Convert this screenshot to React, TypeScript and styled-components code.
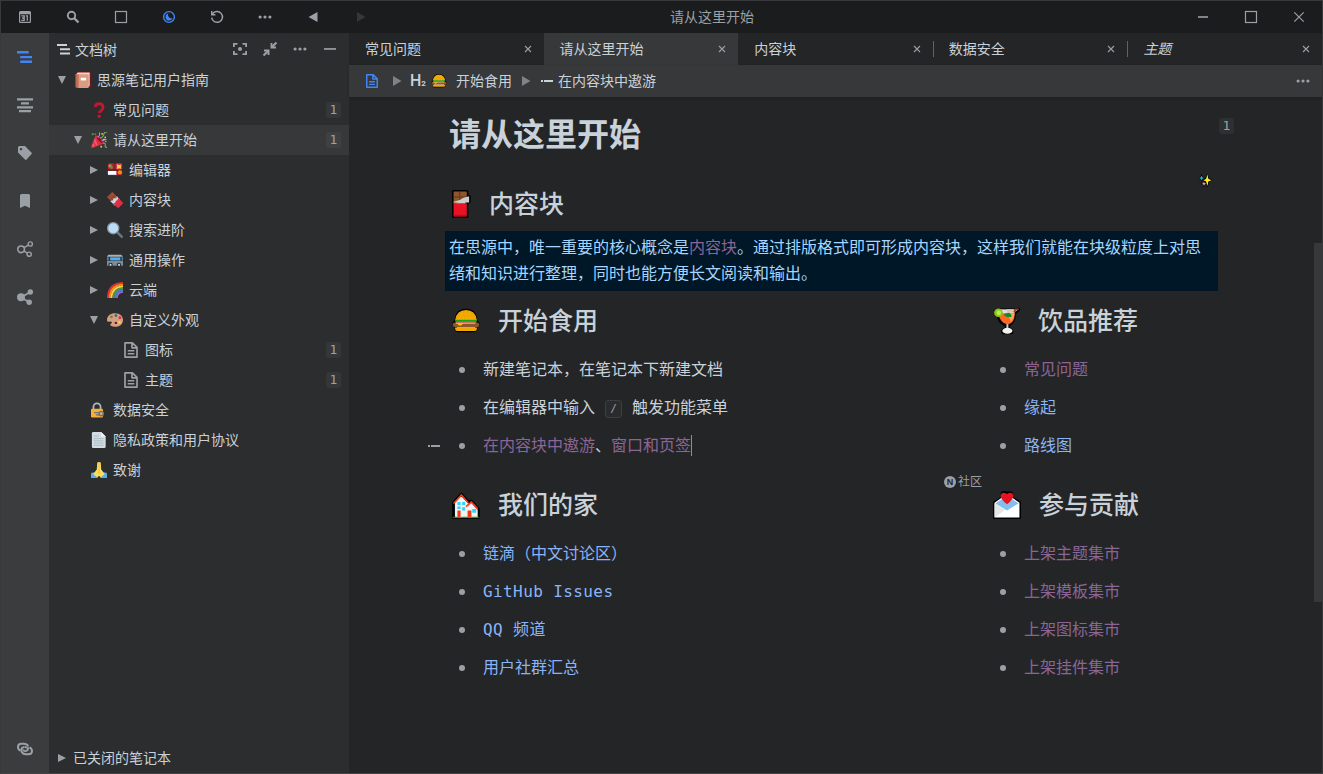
import React from "react";
import styled, { createGlobalStyle, css } from "styled-components";

const Global = createGlobalStyle`
  * { box-sizing: border-box; }
  html, body { margin: 0; padding: 0; background: #242527; }
  body { overflow: hidden; font-family: "Noto Sans CJK SC", sans-serif; color: #c9d1d9; }
  svg { display: block; flex: none; }
  ul, h1, h2, p { margin: 0; padding: 0; font: inherit; }
`;

/* ---------- interface icons ---------- */

const Svg = ({ size = 16, children, box = 16 }: { size?: number; box?: number; children: React.ReactNode }) => (
  <svg width={size} height={size} viewBox={`0 0 ${box} ${box}`} fill="currentColor">{children}</svg>
);

const stroke = { fill: "none", stroke: "currentColor" };

const CalendarIcon = () => (
  <Svg>
    <path fillRule="evenodd" d="M3.500 2h9A1.500 1.500 0 0 1 14 3.500v9a1.500 1.500 0 0 1-1.500 1.500h-9A1.500 1.500 0 0 1 2 12.500v-9A1.500 1.500 0 0 1 3.500 2zM3.200 5.300v7.500h9.600V5.300z" />
    <path d="M4.300 6.800h2.900v4.500H4.300M5 9h2.200M8.700 6.900h1.600v4.900" {...stroke} strokeWidth="1.300" />
  </Svg>
);
const SearchIcon = () => (
  <Svg>
    <circle cx="6.500" cy="6.500" r="3.700" {...stroke} strokeWidth="1.900" />
    <path d="M9.200 9.200l4.300 4.300" {...stroke} strokeWidth="2.400" />
  </Svg>
);
const SquareIcon = () => (
  <Svg><rect x="2.500" y="2.500" width="11" height="11" {...stroke} strokeWidth="1.200" /></Svg>
);
const MoonIcon = () => (
  <Svg>
    <circle cx="8" cy="8" r="5.400" {...stroke} strokeWidth="1.400" />
    <path d="M7.200 4.500A3.600 3.600 0 1 0 11.500 9.200 3.600 3.600 0 0 1 7.200 4.500z" />
  </Svg>
);
const RefreshIcon = () => (
  <Svg>
    <path d="M3.500 5A5.400 5.400 0 1 1 2.700 8.600" {...stroke} strokeWidth="1.500" />
    <path d="M2 2v4.400h4.400V5H3.500V2z" />
  </Svg>
);
const DotsIcon = ({ size = 16 }: { size?: number }) => (
  <Svg size={size}>
    <circle cx="3.100" cy="8" r="1.600" /><circle cx="8" cy="8" r="1.600" /><circle cx="12.900" cy="8" r="1.600" />
  </Svg>
);
const BackIcon = () => <Svg><path d="M12.500 3v10L3.500 8z" /></Svg>;
const ForwardIcon = () => <Svg><path d="M4 3v10l8.500-5z" /></Svg>;
const MinIcon = () => <Svg><path d="M3 7.200h10v1.600H3z" /></Svg>;
const CloseIcon = () => <Svg><path d="M3.300 3.300l9.400 9.400M12.700 3.300l-9.400 9.400" {...stroke} strokeWidth="1.200" /></Svg>;
const SmallCloseIcon = () => <Svg size={8} box={8}><path d="M1 1l6 6M7 1L1 7" {...stroke} strokeWidth="1.100" /></Svg>;
const TreeIcon = () => (
  <Svg><path d="M0 2h11.700v2.400H0zM3.200 6.900H15v2.300H3.200zM3.200 11.600H15V14H3.200z" /></Svg>
);
const TreeTitleIcon = () => (
  <Svg size={14} box={14}><path d="M0 2h10v1.900H0zM3 6.300h10v1.900H3zM3 10.500h10v1.900H3z" /></Svg>
);
const OutlineIcon = () => (
  <Svg><path d="M0 1.200h16v2.200H0zM4 5.200h8v2.200H4zM0 9.200h16v2.200H0zM2 13h12v2.200H2z" /></Svg>
);
const TagIcon = () => (
  <Svg><path fillRule="evenodd" d="M2.500 1H8l6.600 6.700q.7.700 0 1.400l-5 5.400q-.8.800-1.600 0L1 7.500v-5Q1 1 2.500 1zM4 2.900a1.200 1.200 0 1 0 .01 0z" /></Svg>
);
const BookmarkIcon = () => <Svg><path d="M4.500 1h7q1.500 0 1.500 1.500V15l-5-2.300L3 15V2.500Q3 1 4.500 1z" /></Svg>;
const GraphIcon = () => (
  <Svg>
    <circle cx="4.100" cy="8.300" r="3.300" {...stroke} strokeWidth="1.600" />
    <circle cx="13.300" cy="3" r="2.100" {...stroke} strokeWidth="1.400" />
    <circle cx="12.200" cy="13.200" r="2.100" {...stroke} strokeWidth="1.400" />
    <path d="M7 6.700l4.500-2.500M6.800 9.900l3.500 2.200" {...stroke} strokeWidth="1.500" />
  </Svg>
);
const GlobalGraphIcon = () => (
  <Svg>
    <circle cx="4" cy="8.300" r="4" /><circle cx="13.300" cy="3" r="2.700" /><circle cx="12.200" cy="13.200" r="2.700" />
    <path d="M5 7.800l8-4.500M5 9l7 4" {...stroke} strokeWidth="1.700" />
  </Svg>
);
const LinkIcon = () => (
  <Svg>
    <path d="M3.400 9.600Q1 8.400 1 5.900 1 2.700 4.600 2.700H6.800Q10.500 2.700 11.200 5.500" {...stroke} strokeWidth="2" />
    <path d="M12.600 6.400Q15 7.600 15 10.100 15 13.300 11.400 13.300H9.200Q5.200 13.300 4.300 9.800 4.200 6.100 7.600 5.900" {...stroke} strokeWidth="2" />
    <path d="M11.300 6.200Q11.300 9.900 8 10.100 6.300 10 6.400 8.500M9.600 7.500Q9.700 6 8 5.900" {...stroke} strokeWidth="1.800" />
  </Svg>
);
const FocusIcon = () => (
  <Svg>
    <path d="M1.900 6V2.900H5.500M10.500 2.900h3.600V6M14.100 10v3.100h-3.600M5.500 13.100H1.900V10" {...stroke} strokeWidth="1.800" />
    <circle cx="8" cy="8" r="2.100" />
  </Svg>
);
const CollapseIcon = () => (
  <Svg>
    <path d="M9.500 2v4.500H14M2 9.500h4.500V14" {...stroke} strokeWidth="1.900" />
    <path d="M9.500 6.500l5-5M6.500 9.500l-5 5" {...stroke} strokeWidth="2.100" />
  </Svg>
);
const MinusIcon = () => <Svg><path d="M2 7.100h12v1.700H2z" /></Svg>;
const FileIcon = ({ size = 16 }: { size?: number }) => (
  <Svg size={size}>
    <path d="M2 .9h7.400l4.600 4.500v9.700H2zM9 1v4.800h5" {...stroke} strokeWidth="1.700" strokeLinejoin="round" />
    <path d="M4.700 8h6.600v1.600H4.700zM4.700 11h6.600v1.600H4.700z" />
  </Svg>
);
const ItemIcon = () => <Svg size={12} box={12}><path d="M0 5h2v2H0zM3 5h9v2H3z" /></Svg>;

/* ---------- emoji drawings (36 unit grid) ---------- */

const emoji: Record<string, React.ReactNode> = {
  book: (
    <>
      <path fill="#a0041e" d="M3 4Q3 0 7 0h25q3 0 3 3v30q0 3-3 3H5q-4 0-4-4z" />
      <path fill="#e8dccf" d="M4 3q0-2 4-2h25v31H7z" />
      <path fill="#c1694f" d="M1 5q0-2 4-1v32Q1 36 1 32z" />
      <path fill="#d99e82" d="M5 5h24q2 0 2 2v27q0 2-2 2H5z" />
      <path fill="#c1694f" d="M5 5h3v31H5z" />
      <path fill="#fff" d="M13 13h12v6H13z" />
    </>
  ),
  question: (
    <>
      <path d="M10 11q0-7 8-7 9 0 9 8 0 5-5 8-3 2-3 5" fill="none" stroke="#be1931" strokeWidth="6.500" />
      <circle cx="18.500" cy="32" r="3.800" fill="#be1931" />
    </>
  ),
  party: (
    <>
      <path fill="#dd2e44" d="M10 8L0 34q0 3 3 2l26-10q1-4-7-12T10 8z" />
      <path fill="#a0041e" d="M13 11q4 0 9 5t5 9q-4 0-9-5t-5-9z" />
      <path fill="#ea596e" d="M9 14l6 16-3 1-6-10zM5 24l4 8-4 2-3-4z" />
      <path d="M15 12q6-3 4-11M24 21q3-6 11-4" fill="none" stroke="#aa8dd8" strokeWidth="2.500" />
      <path d="M20 14q7-1 9-9t6-3M27 25q6-1 5 5t4 4" fill="none" stroke="#77b255" strokeWidth="2.500" />
      <g fill="#ffcc4d"><circle cx="25" cy="4" r="2" /><circle cx="32" cy="12" r="2" /><circle cx="29" cy="17" r="2" /><circle cx="23" cy="33" r="2" /></g>
      <g fill="#5c913b"><circle cx="4" cy="5" r="2.500" /><circle cx="10" cy="5" r="2" /></g>
      <circle cx="33" cy="21" r="2" fill="#aa8dd8" />
    </>
  ),
  bento: (
    <>
      <rect x="2" y="3" width="15" height="14" rx="3" fill="#be1931" />
      <rect x="19" y="3" width="15" height="14" rx="3" fill="#dd2e44" />
      <path fill="#be1931" d="M2 19h32v9q0 2-2 2H4q-2 0-2-2z" />
      <circle cx="7" cy="9" r="4" fill="#77b255" /><circle cx="10" cy="12" r="3.500" fill="#5c913b" />
      <path fill="#ffcc4d" d="M22 5l5 2 5-1-1 5 1 4-5-1-5 2 1-6z" />
      <path fill="#fff" d="M2 20h19v9H4q-2 0-2-2z" /><path fill="#ccd6dd" d="M3 27h18v2H3z" />
      <circle cx="29" cy="23.500" r="4.800" fill="#f4900c" />
    </>
  ),
  chocolate: (
    <>
      <path fill="#a0503c" d="M12 0l13 13L13 25 0 11z" />
      <path d="M8 4l13 13M4 8l13 13M19 6L6 19" stroke="#6f3428" strokeWidth="1.200" />
      <path fill="#ccd6dd" d="M22 9l8 9-12 13L7 20l6-1 2-5 6 0z" />
      <path fill="#dd2e44" d="M25 13l10 10q2 2 0 4l-8 8q-2 2-4 0L14 26q6-1 6-6 5-1 5-7z" />
    </>
  ),
  magnifier: (
    <>
      <path stroke="#66757f" strokeWidth="6" strokeLinecap="round" d="M25 25l8 8" />
      <circle cx="14" cy="14" r="12.500" fill="#bbddf5" stroke="#8899a6" strokeWidth="3" />
    </>
  ),
  bus: (
    <>
      <path fill="#808b93" d="M3 8h29q4 0 4 4v17q0 2-2 2H0V12q0-4 3-4z" />
      <path fill="#a7b1b8" d="M3 6h29l3 4H0z" />
      <path fill="#292f33" d="M0 11h36v9H0z" />
      <path fill="#55acee" d="M7 12h23v7H7z" />
      <path fill="#3b88c3" d="M0 12h4v7H0zM33 12h3v7h-3z" />
      <g fill="#292f33"><circle cx="8" cy="29" r="5" /><circle cx="27" cy="29" r="5" /></g>
      <g fill="#ccd6dd"><circle cx="8" cy="29" r="2.300" /><circle cx="27" cy="29" r="2.300" /></g>
    </>
  ),
  rainbow: (
    <g fill="none" strokeWidth="4.200">
      <path stroke="#dd2e44" d="M2 36V35Q3 3 36 2" />
      <path stroke="#f4900c" d="M6 36Q7 7 36 6" />
      <path stroke="#ffcc4d" d="M10 36Q11 11 36 10" />
      <path stroke="#5c913b" d="M14 36Q15 15 36 14" />
      <path stroke="#3b88c3" d="M18 36Q19 19 36 18" />
      <path stroke="#9266cc" d="M22 36Q23 23 36 22" />
    </g>
  ),
  palette: (
    <>
      <path fill="#d99e82" d="M18 3C8 3 0 9 0 18q0 5 5 4 5-2 6 1 0 3-3 4-2 2 1 4 7 4 17 1 10-4 10-14Q35 3 18 3z" />
      <path fill="#292f33" d="M17 25a3 2.500 0 1 1 4 2 3 2.500 0 0 1-4-2z" />
      <circle cx="10" cy="11" r="3" fill="#5c913b" /><circle cx="20" cy="8" r="3" fill="#226699" />
      <circle cx="29" cy="13" r="3.200" fill="#dd2e44" /><circle cx="28" cy="23" r="3" fill="#ffcc4d" />
    </>
  ),
  lock: (
    <>
      <path d="M5.500 17v-6a8 8 0 0 1 16 0v6" fill="none" stroke="#aab8c2" strokeWidth="4" />
      <rect x="0" y="15" width="27" height="20" rx="3" fill="#ffac33" />
      <path d="M7 24h13M11 29h9" stroke="#66757f" strokeWidth="2.500" />
      <circle cx="23" cy="26" r="4.800" fill="none" stroke="#66757f" strokeWidth="3.500" />
    </>
  ),
  page: (
    <>
      <path fill="#d3dde3" d="M5 0h18l10 10v23q0 3-3 3H5q-3 0-3-3V3q0-3 3-3z" />
      <path fill="#f5f8fa" d="M23 0l10 10H23z" />
      <path stroke="#99aab5" strokeWidth="1.500" d="M6 9h12M6 15h22M6 20h22M6 25h22M6 30h22" />
    </>
  ),
  pray: (
    <>
      <path fill="#55acee" d="M0 25l7-2 9 9-2 4H0zM36 25l-7-2-9 9 2 4h14z" />
      <path fill="#ffdc5d" d="M14 2q0-2 4-2t4 2l1 15 8 10-9 8-4-4-4 4-9-8 8-10z" />
      <path d="M18 1v20l-3 6M18 21l3 6" fill="none" stroke="#dba832" strokeWidth="1.200" />
    </>
  ),
  choco2: (
    <>
      <path stroke="#000" strokeWidth="4" strokeLinejoin="round" d="M2 2h17v6h3v7l-3 2v17H2z" />
      <path fill="#8e562e" d="M2 2h17v10L2 18z" />
      <path stroke="#5f3517" d="M10 2v12M2 9h17" strokeWidth="1.200" />
      <path fill="#ccc" d="M2 15l8-2 5-3 7-2v8H2z" />
      <path fill="#e81224" d="M2 17h17v17H2z" /><path fill="#b50e1c" d="M2 32h17v2H2z" />
    </>
  ),
  burger: (
    <>
      <path d="M5 17Q6 4 18 4t13 13l3 5-3 3q1 6-4 6H9q-5 0-4-6l-3-3z" stroke="#000" strokeWidth="3.200" strokeLinejoin="round" />
      <path fill="#f0a800" d="M4 17Q6 4 18 4t14 13z" />
      <path fill="#16a51c" d="M4 16.500h28v2.500H4z" /><path fill="#e83a24" d="M5 18.500h26v2H5z" />
      <path fill="#8e562e" d="M1 22.500q0-2.500 3-2.500h28q3 0 3 2.500 0 3.500-4 3.500H5q-4 0-4-3.500z" />
      <path fill="#e0b088" d="M5 20h25v1.600H5z" />
      <path fill="#ffc400" d="M7 21h8l-4 3-3-1z" />
      <path fill="#f0a800" d="M4 26.500h28v1.500q0 3-4 3H8q-4 0-4-3z" />
      <path stroke="#ffc23a" strokeWidth="1" strokeDasharray="1.500 3" d="M12 9h13M9 14h18" />
    </>
  ),
  cocktail: (
    <>
      <path d="M5 4h22l6-1-5 5q-1 13-8 15v5q5 1 4 5H13q-2-4 4-5v-5Q9 21 7 12z" stroke="#000" strokeWidth="4" strokeLinejoin="round" />
      <path fill="#ddd" d="M6 3h22v5H6z" /><path fill="#ff6723" d="M7 8h21q0 13-9 14.500Q9 21 7 8z" />
      <path fill="#ffa64d" d="M19 8h9q-1 7-5 11z" />
      <path fill="#168b2a" d="M15 9l5-2 3 2 1 4-6 0-4-2z" /><path fill="#e4c1a8" d="M18 3l8 0 1 4h-9z" />
      <path d="M18.500 22v8" stroke="#ccc" strokeWidth="2.500" />
      <ellipse cx="18.500" cy="30.500" rx="6.500" ry="3.800" fill="#f2f2f2" />
      <circle cx="7" cy="7.500" r="5.500" fill="#86c80a" /><circle cx="7.500" cy="7.500" r="3" fill="#bbe957" />
      <path stroke="#a33a16" strokeWidth="2" d="M27 7l2-4h4" />
    </>
  ),
  house: (
    <>
      <path d="M2 15L12 4l9 10 4-1 9 10v11H2z" stroke="#000" strokeWidth="3.500" strokeLinejoin="round" />
      <path fill="#f2f2f2" d="M4 15l8-8 8 8v19H4zM19 22l6-6 8 8v10H19z" />
      <path d="M2 16L12 5l9 10M18 20l7-6 8 9" stroke="#f03a17" strokeWidth="2" fill="none" />
      <path fill="#31d2f7" d="M7 14h4v4H7zM13 14h4v4h-4zM13 21h4v4h-4zM26 23h5v5h-5zM7 20h4v3H7z" />
      <path fill="#f03a17" d="M7 25h4v9H7zM20 25h5v9h-5z" /><path fill="#16a50c" d="M1 33h6v1.500H1zM12 33h8v1.500h-8zM25 33h10v1.500H25z" />
    </>
  ),
  letter: (
    <>
      <path d="M2 15L14 8Q9 2 15 2l3 1q8-3 5 5l11 7v19H2z" stroke="#000" strokeWidth="4" strokeLinejoin="round" />
      <path fill="#fff" d="M2 15l10-7h12l10 7v19H2z" />
      <path fill="#83beec" d="M3 16l9-6h12l9 6-15 9z" />
      <path fill="#e6e6e6" d="M2 34V16l14 8z" />
      <path fill="#e81224" d="M18 17q-9-7-8-12 2-5 8-1 6-4 8 1 1 5-8 12z" />
    </>
  ),
  sparkles: (
    <>
      <path d="M23 1l4 12 9 4-9 4-4 14-4-14-7-4 7-4zM7 3l2 6 5 2-5 2-2 5-2-5-5-2 5-2zM14 21l2 4 4 2-4 2-2 5-2-5-4-2 4-2z" stroke="#000" strokeWidth="3" />
      <path fill="#fff100" d="M23 1l3 13 9 3-9 3-3 14-3-14-8-3 8-3z" />
      <path fill="#00bcf2" d="M7 4l2 5 5 2-5 2-2 5-2-5-4-2 4-2z" /><path fill="#ef91c7" d="M14 21l1.500 4 4.500 2-4.500 2-1.500 4-2-4-4-2 4-2z" />
    </>
  ),
};

const Emoji = ({ name, size = 16 }: { name: string; size?: number }) => <Svg size={size} box={36}>{emoji[name]}</Svg>;

/* ---------- frame ---------- */

const Window = styled.div`
  width: 1323px; height: 774px; display: flex; flex-direction: column;
  border: 1px solid #37393b; border-bottom-color: #424345; background: #242527;
`;
const Toolbar = styled.header`
  height: 32px; flex: none; display: flex; justify-content: space-between;
  background: #1b1c1d; color: #9aa0a6; font-size: 14px;
`;
const ToolGroup = styled.div<{ $end?: boolean }>`
  display: flex; ${(p) => p.$end && css`margin-right: -1px;`}
`;
const TitleText = styled.span`margin-right: auto; margin-left: 285px; line-height: 30px; white-space: nowrap;`;
const ToolButton = styled.span<{ $tone?: "accent" | "disabled" }>`
  width: 48px; height: 32px; display: grid; place-items: center;
  color: ${(p) => (p.$tone === "accent" ? "#4285f4" : p.$tone === "disabled" ? "#35373a" : "#9aa0a6")};
`;
const Body = styled.div`flex: 1; min-height: 0; display: flex;`;
const Dock = styled.nav`
  width: 48px; flex: none; display: flex; flex-direction: column; background: #3b3c3e; color: #9aa0a6;
`;
const DockButton = styled.span<{ $active?: boolean; $last?: boolean }>`
  height: 48px; display: grid; place-items: center;
  ${(p) => p.$active && css`color: #4285f4;`}
  ${(p) => p.$last && css`margin-top: auto;`}
`;

/* ---------- document tree ---------- */

const Tree = styled.aside`
  width: 300px; flex: none; display: flex; flex-direction: column; background: #2c2d2e; font-size: 14px;
`;
const TreeHeader = styled.div`
  height: 32px; flex: none; display: flex; align-items: center; padding: 0 11px 0 8px; gap: 4px; line-height: 32px;
`;
const TreeTitle = styled.span`flex: 1;`;
const TreeAction = styled.span`width: 16px; margin-left: 10px; color: #9aa0a6;`;
const Row = styled.div<{ $level: number; $active?: boolean }>`
  height: 30px; flex: none; display: flex; align-items: center;
  padding: 0 8px 0 ${(p) => 4 + p.$level * 16}px;
  background: ${(p) => (p.$active ? "#37383a" : "transparent")};
`;
const Toggle = styled.span<{ $open?: boolean }>`
  width: 18px; display: grid; place-items: center; color: #9aa0a6;
  svg { transform: rotate(${(p) => (p.$open ? 90 : 0)}deg); }
`;
const RowIcon = styled.span`margin: 0 6px 0 4px; color: #9aa0a6;`;
const RowLabel = styled.span`flex: 1; line-height: 28px; padding-bottom: 2px; white-space: nowrap;`;
const Counter = styled.span`
  width: 15px; height: 16px; border-radius: 3px; background: rgba(154, 160, 166, 0.08); color: #9aa0a6;
  font: 13px/16px "DejaVu Sans Mono", monospace; text-align: center;
`;
const ClosedRow = styled(Row)`margin-top: auto; ${RowLabel} { margin-left: 2px; }`;

const Arrow = () => <Svg size={8} box={8}><path d="M0 0l8 4-8 4z" /></Svg>;

type Node = { level: number; label: string; icon: string; toggle?: "open" | "closed"; count?: number; active?: boolean };
const nodes: Node[] = [
  { level: 0, label: "思源笔记用户指南", icon: "book", toggle: "open" },
  { level: 1, label: "常见问题", icon: "question", count: 1 },
  { level: 1, label: "请从这里开始", icon: "party", toggle: "open", count: 1, active: true },
  { level: 2, label: "编辑器", icon: "bento", toggle: "closed" },
  { level: 2, label: "内容块", icon: "chocolate", toggle: "closed" },
  { level: 2, label: "搜索进阶", icon: "magnifier", toggle: "closed" },
  { level: 2, label: "通用操作", icon: "bus", toggle: "closed" },
  { level: 2, label: "云端", icon: "rainbow", toggle: "closed" },
  { level: 2, label: "自定义外观", icon: "palette", toggle: "open" },
  { level: 3, label: "图标", icon: "file", count: 1 },
  { level: 3, label: "主题", icon: "file", count: 1 },
  { level: 1, label: "数据安全", icon: "lock" },
  { level: 1, label: "隐私政策和用户协议", icon: "page" },
  { level: 1, label: "致谢", icon: "pray" },
];

/* ---------- editor ---------- */

const Main = styled.main`flex: 1; min-width: 0; display: flex; flex-direction: column;`;
const Tabs = styled.div`height: 32px; flex: none; display: flex; background: #242527;`;
const Tab = styled.div<{ $active?: boolean; $divided?: boolean; $italic?: boolean }>`
  flex: 1; display: flex; align-items: center; justify-content: space-between; position: relative;
  padding: 0 12px 0 16px; font-size: 14px; color: #c9d1d9;
  background: ${(p) => (p.$active ? "#37383a" : "transparent")};
  font-style: ${(p) => (p.$italic ? "italic" : "normal")};
  svg { color: #9aa0a6; }
  ${(p) => p.$divided && css`
    &::after { content: ""; position: absolute; right: -1px; top: 8px; width: 1px; height: 16px; background: #5f6368; }
  `}
`;
const TabLabel = styled.span`line-height: 30px; padding-bottom: 2px;`;
const Breadcrumb = styled.div`
  height: 32px; flex: none; display: flex; align-items: center; padding: 0 11px 0 16px;
  background: #37383a; font-size: 14px; box-shadow: 0 1px 3px rgba(0, 0, 0, 0.2); z-index: 1;
`;
const Crumb = styled.span<{ $gap?: number; $tone?: string }>`
  display: flex; align-items: center; margin-left: ${(p) => p.$gap ?? 0}px; color: ${(p) => p.$tone ?? "#c9d1d9"};
`;
const CrumbText = styled(Crumb)`line-height: 30px; padding-bottom: 2px;`;
const HeadingMark = styled.span`
  display: flex; align-items: baseline; width: 16px; margin-left: 8px; padding-top: 2px; font: 500 16px/30px Roboto, sans-serif;
  small { font-size: 8px; font-weight: 700; }
`;
const Fill = styled.span`flex: 1;`;
const Scroller = styled.section`flex: 1; min-height: 0; display: flex; justify-content: space-between;`;
const Page = styled.article`width: 773px; margin-left: 96px; padding-top: 18px;`;
const Gutter = styled.div`flex: 1; padding: 21px 0 0 1px;`;
const Thumb = styled.div`width: 8px; height: 359px; margin-top: 146px; background: #37383a;`;
const Title = styled.h1`height: 40px; padding-left: 4px; font-size: 32px; font-weight: 700; line-height: 35px;`;
const Heading = styled.h2<{ $top: number; $bottom: number }>`
  height: 40px; margin: ${(p) => p.$top}px 0 ${(p) => p.$bottom}px; padding-left: 7px; position: relative;
  display: flex; align-items: center; font-size: 25px; font-weight: 500;
`;
const HeadingText = styled.span<{ $gap: number }>`margin-left: ${(p) => p.$gap}px; line-height: 36px; padding-bottom: 4px;`;
const Sparkle = styled.span`position: absolute; right: 6px; top: -10px;`;
const Callout = styled.p`
  height: 60px; padding: 2px 4px 6px; background: #001728; color: #a5d6ff; font-size: 16px; line-height: 26px; white-space: nowrap;
`;
const Ref = styled.span`color: #8a6596;`;
const Columns = styled.div`display: grid; grid-template-columns: 541px 232px;`;
const Items = styled.ul`list-style: none;`;
const Item = styled.li`
  position: relative; height: 38px; display: flex; align-items: center; padding: 0 0 2px 38px;
  font-size: 16px; line-height: 36px; white-space: pre;
  &::before { content: ""; position: absolute; left: 14px; top: 17px; width: 6px; height: 6px; border-radius: 50%; background: #9aa0a6; }
`;
const Link = styled.span<{ $mono?: boolean }>`
  color: #8ab4f8;
  ${(p) => p.$mono && css`padding-top: 3px; line-height: 33px; font-family: "DejaVu Sans Mono", "Noto Sans CJK SC", monospace; letter-spacing: 0.4px;`}
`;
const Key = styled.code`
  margin: 5px 10px 0; width: 17px; height: 18px; border: 1px solid #3c3e40; border-radius: 3px; background: #2a2b2d;
  color: #9aa0a6; font: 11px/16px "DejaVu Sans Mono", monospace; text-align: center;
`;
const Caret = styled.span`width: 1px; height: 21px; margin-top: 2px; background: #a37fb0;`;
const BlockMark = styled.span`position: absolute; left: -17px; top: 14px; color: #9aa0a6;`;
const Label = styled.span`
  position: absolute; left: -42px; top: -13px; display: flex; align-items: center; gap: 2px;
  color: #9aa0a6; font-size: 12px; font-weight: 400; line-height: 18px;
`;
const LabelMark = styled.b`
  width: 12px; height: 12px; margin-top: 1px; border-radius: 50%; background: #9aa0a6; color: #242527;
  font: 700 9px/12px "Liberation Sans", sans-serif; text-align: center;
`;
const GutterCount = styled(Counter)`display: block;`;
const CrumbArrow = () => <Svg size={10} box={10}><path d="M1 0l8.500 5L1 10z" /></Svg>;

const tabs = ["常见问题", "请从这里开始", "内容块", "数据安全", "主题"];

export default function App() {
  return (
    <Window>
      <Global />
      <Toolbar>
        <ToolGroup>
          <ToolButton><CalendarIcon /></ToolButton>
          <ToolButton><SearchIcon /></ToolButton>
          <ToolButton><SquareIcon /></ToolButton>
          <ToolButton $tone="accent"><MoonIcon /></ToolButton>
          <ToolButton><RefreshIcon /></ToolButton>
          <ToolButton><DotsIcon /></ToolButton>
          <ToolButton><BackIcon /></ToolButton>
          <ToolButton $tone="disabled"><ForwardIcon /></ToolButton>
        </ToolGroup>
        <TitleText>请从这里开始</TitleText>
        <ToolGroup $end>
          <ToolButton><MinIcon /></ToolButton>
          <ToolButton><SquareIcon /></ToolButton>
          <ToolButton><CloseIcon /></ToolButton>
        </ToolGroup>
      </Toolbar>
      <Body>
        <Dock>
          <DockButton $active><TreeIcon /></DockButton>
          <DockButton><OutlineIcon /></DockButton>
          <DockButton><TagIcon /></DockButton>
          <DockButton><BookmarkIcon /></DockButton>
          <DockButton><GraphIcon /></DockButton>
          <DockButton><GlobalGraphIcon /></DockButton>
          <DockButton $last><LinkIcon /></DockButton>
        </Dock>
        <Tree>
          <TreeHeader>
            <TreeTitleIcon />
            <TreeTitle>文档树</TreeTitle>
            <TreeAction><FocusIcon /></TreeAction>
            <TreeAction><CollapseIcon /></TreeAction>
            <TreeAction><DotsIcon /></TreeAction>
            <TreeAction><MinusIcon /></TreeAction>
          </TreeHeader>
          {nodes.map((n) => (
            <Row key={n.label} $level={n.level} $active={n.active}>
              <Toggle $open={n.toggle === "open"}>{n.toggle && <Arrow />}</Toggle>
              <RowIcon>{n.icon === "file" ? <FileIcon /> : <Emoji name={n.icon} />}</RowIcon>
              <RowLabel>{n.label}</RowLabel>
              {n.count && <Counter>{n.count}</Counter>}
            </Row>
          ))}
          <ClosedRow $level={0}>
            <Toggle><Arrow /></Toggle>
            <RowLabel>已关闭的笔记本</RowLabel>
          </ClosedRow>
        </Tree>
        <Main>
          <Tabs>
            {tabs.map((t, i) => (
              <Tab key={t} $active={i === 1} $divided={i === 2 || i === 3} $italic={i === 4}>
                <TabLabel>{t}</TabLabel>
                <SmallCloseIcon />
              </Tab>
            ))}
          </Tabs>
          <Breadcrumb>
            <Crumb $tone="#4285f4"><FileIcon size={14} /></Crumb>
            <Crumb $gap={13} $tone="#7e8388"><CrumbArrow /></Crumb>
            <HeadingMark>H<small>2</small></HeadingMark>
            <Crumb $gap={5}><Emoji name="burger" size={16} /></Crumb>
            <CrumbText $gap={9}>开始食用</CrumbText>
            <Crumb $gap={9} $tone="#7e8388"><CrumbArrow /></Crumb>
            <Crumb $gap={10}><ItemIcon /></Crumb>
            <CrumbText $gap={5}>在内容块中遨游</CrumbText>
            <Fill />
            <Crumb $tone="#9aa0a6"><DotsIcon /></Crumb>
          </Breadcrumb>
          <Scroller>
            <Page>
              <Title>请从这里开始</Title>
              <Heading $top={29} $bottom={7}>
                <Emoji name="choco2" size={28} />
                <HeadingText $gap={9}>内容块</HeadingText>
                <Sparkle><Emoji name="sparkles" size={13} /></Sparkle>
              </Heading>
              <Callout>
                在思源中，唯一重要的核心概念是<Ref>内容块</Ref>。通过排版格式即可形成内容块，这样我们就能在块级粒度上对思
                <br />
                绪和知识进行整理，同时也能方便长文阅读和输出。
              </Callout>
              <Columns>
                <div>
                  <Heading $top={10} $bottom={9}>
                    <Emoji name="burger" size={28} />
                    <HeadingText $gap={18}>开始食用</HeadingText>
                  </Heading>
                  <Items>
                    <Item>新建笔记本，在笔记本下新建文档</Item>
                    <Item>在编辑器中输入<Key>/</Key>触发功能菜单</Item>
                    <Item>
                      <BlockMark><ItemIcon /></BlockMark>
                      <Ref>在内容块中遨游</Ref>、<Ref>窗口和页签</Ref><Caret />
                    </Item>
                  </Items>
                </div>
                <div>
                  <Heading $top={10} $bottom={9}>
                    <Emoji name="cocktail" size={28} />
                    <HeadingText $gap={17}>饮品推荐</HeadingText>
                  </Heading>
                  <Items>
                    <Item><Ref>常见问题</Ref></Item>
                    <Item><Link>缘起</Link></Item>
                    <Item><Link>路线图</Link></Item>
                  </Items>
                </div>
                <div>
                  <Heading $top={21} $bottom={9}>
                    <Emoji name="house" size={28} />
                    <HeadingText $gap={18}>我们的家</HeadingText>
                  </Heading>
                  <Items>
                    <Item><Link>链滴（中文讨论区）</Link></Item>
                    <Item><Link $mono>GitHub Issues</Link></Item>
                    <Item><Link $mono>QQ 频道</Link></Item>
                    <Item><Link>用户社群汇总</Link></Item>
                  </Items>
                </div>
                <div>
                  <Heading $top={21} $bottom={9}>
                    <Label><LabelMark>N</LabelMark>社区</Label>
                    <Emoji name="letter" size={28} />
                    <HeadingText $gap={18}>参与贡献</HeadingText>
                  </Heading>
                  <Items>
                    <Item><Ref>上架主题集市</Ref></Item>
                    <Item><Ref>上架模板集市</Ref></Item>
                    <Item><Ref>上架图标集市</Ref></Item>
                    <Item><Ref>上架挂件集市</Ref></Item>
                  </Items>
                </div>
              </Columns>
            </Page>
            <Gutter><GutterCount>1</GutterCount></Gutter>
            <Thumb />
          </Scroller>
        </Main>
      </Body>
    </Window>
  );
}
